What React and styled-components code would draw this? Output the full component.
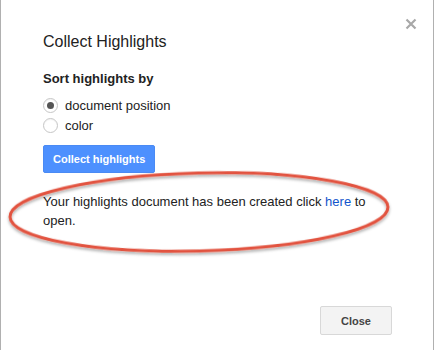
import React, { useState } from "react";
import styled, { createGlobalStyle } from "styled-components";

const GlobalStyle = createGlobalStyle`
  html, body {
    margin: 0;
    padding: 0;
    background: #fff;
  }
  body {
    font-family: Arial, "Liberation Sans", sans-serif;
  }
`;

const Page = styled.div`
  width: 436px;
  height: 350px;
  background: #fff;
  box-sizing: border-box;
  padding-right: 2px;
`;

const Dialog = styled.div`
  position: relative;
  height: 100%;
  box-sizing: border-box;
  border-left: 1px solid #b0b0b0;
  border-right: 1px solid #b0b0b0;
  padding: 30px 42px 0 42px;
  display: flex;
  flex-direction: column;
  color: #222;
`;

const CloseX = styled.button`
  position: absolute;
  top: 15px;
  right: 13px;
  width: 18px;
  height: 18px;
  padding: 0;
  border: none;
  background: none;
  cursor: pointer;
  display: flex;
  align-items: center;
  justify-content: center;
`;

const Title = styled.h1`
  margin: 0;
  font-size: 16px;
  font-weight: normal;
  line-height: 24px;
  color: #222;
`;

const SectionLabel = styled.div`
  margin-top: 16px;
  font-size: 13px;
  font-weight: bold;
  line-height: 18px;
`;

const RadioList = styled.div`
  margin-top: 10px;
  display: flex;
  flex-direction: column;
  gap: 5px;
`;

const RadioRow = styled.label`
  display: flex;
  align-items: center;
  gap: 7px;
  font-size: 13px;
  line-height: 15px;
  cursor: pointer;
`;

const RadioDot = styled.span`
  width: 13px;
  height: 13px;
  border-radius: 50%;
  border: 1px solid #c6c6c6;
  background: #fff;
  display: flex;
  align-items: center;
  justify-content: center;
  box-shadow: inset 0 1px 1px rgba(0, 0, 0, 0.05);

  &::after {
    content: "";
    width: 7px;
    height: 7px;
    border-radius: 50%;
    background: ${(p) => (p.$checked ? "#555" : "transparent")};
  }
`;

const PrimaryButton = styled.button`
  align-self: flex-start;
  margin-top: 12px;
  height: 28px;
  padding: 0 9px;
  border: 1px solid #4a8af4;
  border-radius: 2px;
  background: #4d90fe;
  color: #fff;
  font-family: Arial, "Liberation Sans", sans-serif;
  font-size: 11px;
  font-weight: bold;
  cursor: pointer;
`;

const Message = styled.p`
  margin: 19px 0 0 0;
  font-size: 13px;
  line-height: 19px;
  color: #222;
`;

const Link = styled.a`
  color: #15c;
  text-decoration: none;
`;

const Footer = styled.div`
  margin-top: auto;
  padding-bottom: 15px;
  display: flex;
  justify-content: flex-end;
  margin-right: -1px;
`;

const SecondaryButton = styled.button`
  width: 72px;
  height: 29px;
  border: 1px solid #d8d8d8;
  border-radius: 2px;
  background: #f3f3f3;
  color: #444;
  font-family: Arial, "Liberation Sans", sans-serif;
  font-size: 11px;
  font-weight: bold;
  cursor: pointer;
`;

const Annotation = styled.svg`
  position: absolute;
  left: 0;
  top: 0;
  width: 436px;
  height: 350px;
  pointer-events: none;
  overflow: visible;
`;

export default function App() {
  const [sort, setSort] = useState("position");

  return (
    <Page>
      <GlobalStyle />
      <Dialog>
        <CloseX aria-label="Close">
          <svg width="12" height="12" viewBox="0 0 12 12">
            <path d="M1.5 1.5 L10.5 10.5 M10.5 1.5 L1.5 10.5" stroke="#a8a8a8" strokeWidth="2.2" />
          </svg>
        </CloseX>
        <Title>Collect Highlights</Title>
        <SectionLabel>Sort highlights by</SectionLabel>
        <RadioList>
          <RadioRow onClick={() => setSort("position")}>
            <RadioDot $checked={sort === "position"} />
            document position
          </RadioRow>
          <RadioRow onClick={() => setSort("color")}>
            <RadioDot $checked={sort === "color"} />
            color
          </RadioRow>
        </RadioList>
        <PrimaryButton>Collect highlights</PrimaryButton>
        <Message>
          Your highlights document has been created click <Link href="#">here</Link> to
          open.
        </Message>
        <Footer>
          <SecondaryButton>Close</SecondaryButton>
        </Footer>
        <Annotation viewBox="0 0 436 350">
          <defs>
            <filter id="sh" x="-10%" y="-20%" width="120%" height="150%">
              <feDropShadow dx="0" dy="2" stdDeviation="1.5" floodColor="#000" floodOpacity="0.35" />
            </filter>
          </defs>
          <ellipse
            cx="198"
            cy="212"
            rx="189"
            ry="39"
            transform="rotate(-1.5 198 212)"
            fill="none"
            stroke="#e2533f"
            strokeWidth="3"
            filter="url(#sh)"
          />
        </Annotation>
      </Dialog>
    </Page>
  );
}
